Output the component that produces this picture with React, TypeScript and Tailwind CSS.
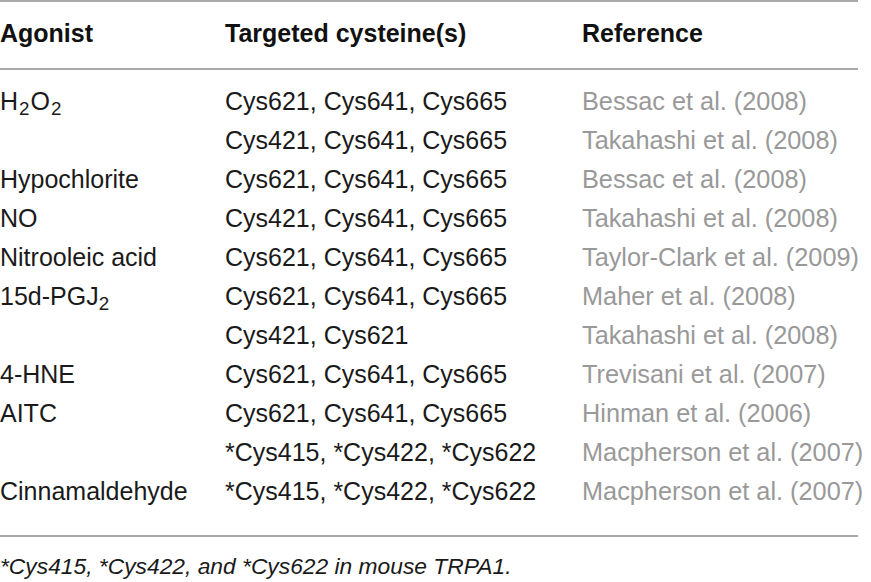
import React from "react";

type Row = {
  agonist: React.ReactNode;
  cysteines: string;
  reference: string;
};

const rows: Row[] = [
  {
    agonist: (
      <>
        H<sub className="mx-[1px]">2</sub>O<sub className="ml-[1px]">2</sub>
      </>
    ),
    cysteines: "Cys621, Cys641, Cys665",
    reference: "Bessac et al. (2008)",
  },
  { agonist: "", cysteines: "Cys421, Cys641, Cys665", reference: "Takahashi et al. (2008)" },
  { agonist: "Hypochlorite", cysteines: "Cys621, Cys641, Cys665", reference: "Bessac et al. (2008)" },
  { agonist: "NO", cysteines: "Cys421, Cys641, Cys665", reference: "Takahashi et al. (2008)" },
  { agonist: "Nitrooleic acid", cysteines: "Cys621, Cys641, Cys665", reference: "Taylor-Clark et al. (2009)" },
  {
    agonist: (
      <>
        15d-PGJ<sub>2</sub>
      </>
    ),
    cysteines: "Cys621, Cys641, Cys665",
    reference: "Maher et al. (2008)",
  },
  { agonist: "", cysteines: "Cys421, Cys621", reference: "Takahashi et al. (2008)" },
  { agonist: "4-HNE", cysteines: "Cys621, Cys641, Cys665", reference: "Trevisani et al. (2007)" },
  { agonist: "AITC", cysteines: "Cys621, Cys641, Cys665", reference: "Hinman et al. (2006)" },
  { agonist: "", cysteines: "*Cys415, *Cys422, *Cys622", reference: "Macpherson et al. (2007)" },
  { agonist: "Cinnamaldehyde", cysteines: "*Cys415, *Cys422, *Cys622", reference: "Macpherson et al. (2007)" },
];

const cols = "grid grid-cols-[225px_357px_1fr]";

export default function App() {
  return (
    <div className="min-h-[582px] w-[871px] bg-white font-['Liberation_Sans',Arial,sans-serif] text-[#1a1a1a]">
      <div className="w-[858px]">
        {/* header */}
        <div className={`${cols} border-y-2 border-[#aaaaaa] pt-[12px] pb-[15px] text-[25px] font-bold leading-[39px] text-[#111]`}>
          <div>Agonist</div>
          <div>Targeted cysteine(s)</div>
          <div>Reference</div>
        </div>

        {/* body */}
        <div className="border-b-2 border-[#aaaaaa] pt-[12px] pb-[24px] text-[25px] leading-[39px]">
          {rows.map((row, i) => (
            <div key={i} className={`${cols} h-[39px] whitespace-nowrap`}>
              <div>{row.agonist}</div>
              <div>{row.cysteines}</div>
              <div className="text-[25.3px] text-[#999999]">{row.reference}</div>
            </div>
          ))}
        </div>

        <p className="pt-[14px] text-[22.8px] italic leading-[30px]">
          *Cys415, *Cys422, and *Cys622 in mouse TRPA1.
        </p>
      </div>
    </div>
  );
}
